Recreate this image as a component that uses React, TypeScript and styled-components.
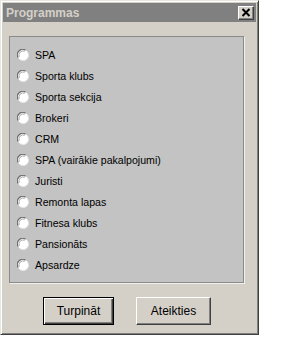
import styled, { createGlobalStyle } from 'styled-components'

const GlobalStyle = createGlobalStyle`
  html, body {
    margin: 0;
    padding: 0;
    background: #ffffff;
    font-family: "Liberation Sans", Arial, sans-serif;
  }
`

const programs = [
  'SPA',
  'Sporta klubs',
  'Sporta sekcija',
  'Brokeri',
  'CRM',
  'SPA (vairākie pakalpojumi)',
  'Juristi',
  'Remonta lapas',
  'Fitnesa klubs',
  'Pansionāts',
  'Apsardze',
]

const Window = styled.div`
  box-sizing: border-box;
  width: 259px;
  height: 335px;
  background: #d4d0c8;
  border-style: solid;
  border-width: 1px;
  border-color: #e8e6e0 #404040 #404040 #e8e6e0;
  box-shadow: inset 1px 1px 0 #ffffff, inset -1px -1px 0 #808080;
  padding: 2px;
  display: flex;
  flex-direction: column;
`

const TitleBar = styled.div`
  height: 19px;
  background: #808080;
  display: flex;
  align-items: center;
  justify-content: space-between;
  padding: 0 2px 0 3px;
`

const Title = styled.span`
  color: #d4d0c8;
  font-weight: bold;
  font-size: 12px;
`

const CloseButton = styled.button`
  box-sizing: border-box;
  width: 16px;
  height: 14px;
  padding: 0;
  background: #d4d0c8;
  border-style: solid;
  border-width: 1px;
  border-color: #ffffff #404040 #404040 #ffffff;
  box-shadow: inset -1px -1px 0 #808080;
  display: flex;
  align-items: center;
  justify-content: center;
`

const Group = styled.div`
  margin: 14px 0 0 6px;
  width: 233px;
  background: #c3c3c3;
  border: 1px solid #8a8a8a;
  box-shadow: 1px 1px 0 #f0f0f0;
  padding: 7px 0;
  display: flex;
  flex-direction: column;
`

const Row = styled.label`
  height: 21px;
  display: flex;
  align-items: center;
  padding-left: 7px;
  gap: 6px;
  font-size: 10.6px;
  color: #000000;
`

const ButtonRow = styled.div`
  display: flex;
  gap: 22px;
  margin-top: 14px;
  padding-left: 40px;
`

const Button = styled.button<{ $default?: boolean }>`
  box-sizing: border-box;
  width: ${(p) => (p.$default ? '71px' : '75px')};
  height: 28px;
  background: #d4d0c8;
  font-family: "Liberation Sans", Arial, sans-serif;
  font-size: 12px;
  color: #000000;
  padding: 0;
  border-style: solid;
  border-width: 1px;
  border-color: ${(p) => (p.$default ? '#000000' : '#ffffff #404040 #404040 #ffffff')};
  box-shadow: ${(p) =>
    p.$default
      ? 'inset 1px 1px 0 #ffffff, inset -1px -1px 0 #404040, inset -2px -2px 0 #808080'
      : 'inset -1px -1px 0 #808080'};
`

function RadioIcon() {
  return (
    <svg width="12" height="12" viewBox="0 0 12 12">
      <circle cx="6" cy="6" r="5.5" fill="#ffffff" />
      <path d="M1.2 8.5 A5.3 5.3 0 0 1 8.5 1.2" stroke="#6e6e6e" strokeWidth="1.2" fill="none" />
      <path d="M2.3 7.7 A4.1 4.1 0 0 1 7.7 2.3" stroke="#a8a8a8" strokeWidth="1" fill="none" />
      <path d="M10.8 3.5 A5.3 5.3 0 0 1 3.5 10.8" stroke="#e6e6e6" strokeWidth="1" fill="none" />
    </svg>
  )
}

function CloseIcon() {
  return (
    <svg width="10" height="9" viewBox="0 0 10 9">
      <path d="M1.5 1 L8.5 8 M8.5 1 L1.5 8" stroke="#000000" strokeWidth="2" />
    </svg>
  )
}

export default function App() {
  return (
    <>
      <GlobalStyle />
      <Window>
        <TitleBar>
          <Title>Programmas</Title>
          <CloseButton>
            <CloseIcon />
          </CloseButton>
        </TitleBar>
        <Group>
          {programs.map((name) => (
            <Row key={name}>
              <RadioIcon />
              {name}
            </Row>
          ))}
        </Group>
        <ButtonRow>
          <Button $default>Turpināt</Button>
          <Button>Ateikties</Button>
        </ButtonRow>
      </Window>
    </>
  )
}
